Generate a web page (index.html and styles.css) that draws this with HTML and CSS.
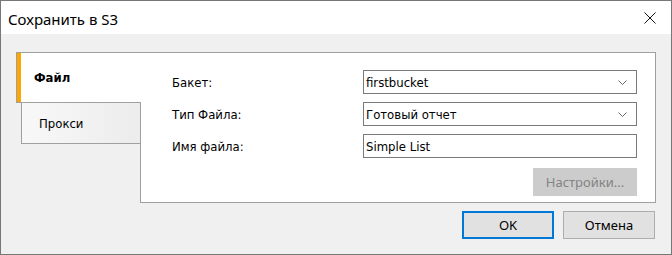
FILE: index.html
```html
<!DOCTYPE html>
<html lang="ru">
<head>
<meta charset="utf-8">
<title>Сохранить в S3</title>
<link rel="stylesheet" href="styles.css">
</head>
<body>
<div class="window">
  <div class="titlebar">
    <span class="title">Сохранить в S3</span>
    <svg class="close" width="12" height="12" viewBox="0 0 12 12"><path d="M0.5 0.5 L11.5 11.5 M11.5 0.5 L0.5 11.5" stroke="#111" stroke-width="1" fill="none"/></svg>
  </div>
  <div class="content">
    <div class="main">
      <div class="tabs">
        <div class="tab tab-active">Файл</div>
        <div class="tab tab-inactive">Прокси</div>
      </div>
      <div class="panel">
        <div class="form">
          <label class="label">Бакет:</label>
          <div class="field select"><span>firstbucket</span><svg class="chev" width="9" height="5" viewBox="0 0 9 5"><path d="M0.5 0.5 L4.5 4.5 L8.5 0.5" stroke="#666" fill="none"/></svg></div>
          <label class="label">Тип Файла:</label>
          <div class="field select"><span>Готовый отчет</span><svg class="chev" width="9" height="5" viewBox="0 0 9 5"><path d="M0.5 0.5 L4.5 4.5 L8.5 0.5" stroke="#666" fill="none"/></svg></div>
          <label class="label">Имя файла:</label>
          <div class="field"><span>Simple List</span></div>
        </div>
        <div class="settings-row">
          <button class="btn btn-disabled">Настройки...</button>
        </div>
      </div>
    </div>
    <div class="footer">
      <button class="btn btn-primary">OK</button>
      <button class="btn">Отмена</button>
    </div>
  </div>
</div>
</body>
</html>
```
FILE: styles.css
```css
html, body {
  margin: 0;
  padding: 0;
  background: #f0f0f0;
}
.window {
  width: 672px;
  height: 255px;
  box-sizing: border-box;
  border: 1px solid #777777;
  background: #f0f0f0;
  display: flex;
  flex-direction: column;
  font-family: "DejaVu Sans Condensed", "DejaVu Sans", sans-serif;
  font-size: 13px;
  color: #000;
}
.titlebar {
  height: 33px;
  background: #ffffff;
  display: flex;
  align-items: center;
  justify-content: space-between;
  padding: 0 15px 0 7px;
  flex: none;
}
.title {
  font-family: "Noto Sans", "Open Sans", sans-serif;
  font-size: 15px;
  color: #000;
  position: relative;
  top: 1px;
}
.close {
  display: block;
}
.content {
  flex: 1;
  padding: 18px 15px 0 15px;
  display: flex;
  flex-direction: column;
}
.main {
  display: flex;
  height: 151px;
}
.tabs {
  width: 124px;
  flex: none;
  display: flex;
  flex-direction: column;
}
.tab {
  box-sizing: border-box;
  border: 1px solid #a0a0a0;
  border-right: none;
  display: flex;
  align-items: center;
}
.tab-active {
  height: 51px;
  width: 125px;
  margin-right: -1px;
  background: #fff;
  box-shadow: inset 4px 0 0 #ffa500;
  font-weight: bold;
  padding-left: 17px;
  position: relative;
  z-index: 1;
}
.tab-inactive {
  height: 42px;
  margin-top: -1px;
  margin-left: 5px;
  background: linear-gradient(to right, #f8f8f8, #ececec);
  padding-left: 17px;
}
.panel {
  flex: 1;
  box-sizing: border-box;
  border: 1px solid #a0a0a0;
  background: #ffffff;
  padding: 17px 0 0 31px;
  display: flex;
  flex-direction: column;
}
.form {
  display: grid;
  grid-template-columns: 191px 274px;
  grid-auto-rows: 24px;
  row-gap: 8px;
}
.label {
  display: flex;
  align-items: center;
}
.field {
  box-sizing: border-box;
  border: 1px solid #7a7a7a;
  background: #fff;
  display: flex;
  align-items: center;
  justify-content: space-between;
  padding: 0 9px 0 2px;
}
.chev {
  display: block;
}
.settings-row {
  display: flex;
  justify-content: flex-end;
  width: 465px;
  margin-top: 10px;
}
.btn {
  box-sizing: border-box;
  height: 28px;
  width: 92px;
  border: 1px solid #adadad;
  background: #e1e1e1;
  font-family: "Noto Sans", "Open Sans", sans-serif;
  font-size: 13px;
  color: #000;
  padding: 0;
  margin: 0;
}
.btn-disabled {
  width: 104px;
  background: #cccccc;
  border-color: #cccccc;
  color: #838383;
}
.btn-primary {
  border: 2px solid #0078d7;
}
.footer {
  display: flex;
  justify-content: flex-end;
  gap: 9px;
  margin-top: 8px;
  margin-right: 1px;
}
```
